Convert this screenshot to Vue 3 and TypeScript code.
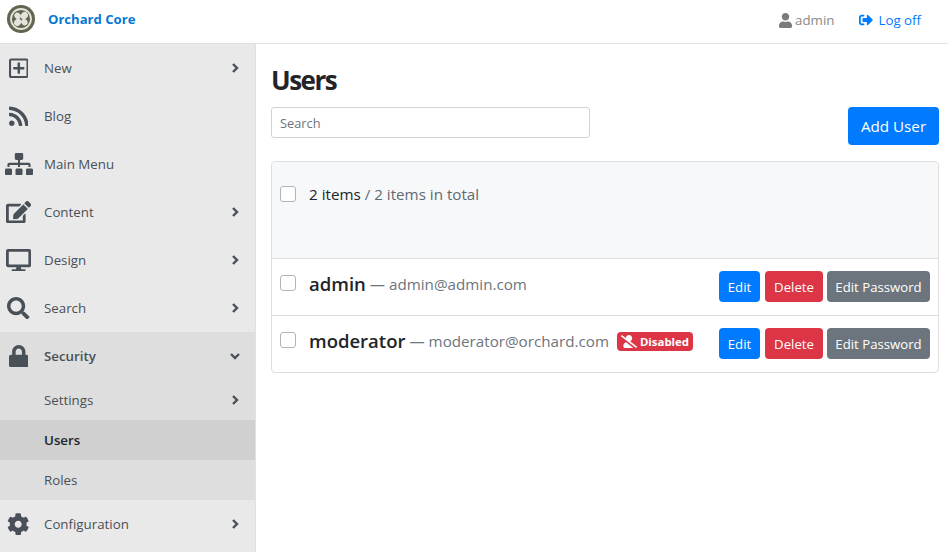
<script setup lang="ts">
interface Item { label: string; icon: string; arrow?: boolean }
const top: Item[] = [
  { label: 'New', icon: 'new', arrow: true },
  { label: 'Blog', icon: 'rss' },
  { label: 'Main Menu', icon: 'tree' },
  { label: 'Content', icon: 'edit', arrow: true },
  { label: 'Design', icon: 'desktop', arrow: true },
  { label: 'Search', icon: 'search', arrow: true },
]
const users = [
  { name: 'admin', email: 'admin@admin.com', disabled: false },
  { name: 'moderator', email: 'moderator@orchard.com', disabled: true },
]
</script>

<template>
  <div class="page">
    <header class="topbar">
      <div class="brand">
        <svg class="logo" width="28" height="28" viewBox="0 0 28 28">
          <circle cx="14" cy="14" r="14" fill="#62654f" />
          <circle cx="14" cy="14" r="10" fill="none" stroke="#e4e4da" stroke-width="1.800" />
          <g fill="#e4e4da">
            <ellipse cx="10.600" cy="10.800" rx="3.400" ry="3" transform="rotate(45 10.600 10.800)" />
            <ellipse cx="17.300" cy="10.700" rx="3.900" ry="3.300" transform="rotate(-45 17.300 10.700)" />
            <ellipse cx="17.400" cy="17.200" rx="3.400" ry="3" transform="rotate(45 17.400 17.200)" />
            <ellipse cx="10.700" cy="17.300" rx="3.900" ry="3.300" transform="rotate(-45 10.700 17.300)" />
          </g>
        </svg>
        <span class="brand-name">Orchard Core</span>
      </div>
      <nav class="user-nav">
        <span class="user">
          <svg width="13" height="15" viewBox="0 0 448 512"><path fill="#7b7b7b" d="M224 256c70.700 0 128-57.300 128-128S294.700 0 224 0 96 57.300 96 128s57.300 128 128 128zm89.600 32h-16.700c-22.200 10.200-46.900 16-72.900 16s-50.600-5.800-72.900-16h-16.700C60.200 288 0 348.200 0 422.400V464c0 26.500 21.500 48 48 48h352c26.500 0 48-21.500 48-48v-41.600c0-74.200-60.200-134.400-134.400-134.400z"/></svg>
          admin
        </span>
        <a class="logoff">
          <svg width="14" height="14" viewBox="0 0 512 512"><path fill="#007bff" d="M497 273L329 441c-15 15-41 4.500-41-17v-96H152c-13.300 0-24-10.700-24-24v-96c0-13.300 10.700-24 24-24h136V88c0-21.400 25.900-32 41-17l168 168c9.300 9.400 9.300 24.600 0 34zM192 436v-40c0-6.600-5.400-12-12-12H96c-17.700 0-32-14.300-32-32V160c0-17.700 14.300-32 32-32h84c6.600 0 12-5.400 12-12V76c0-6.600-5.400-12-12-12H96c-53 0-96 43-96 96v192c0 53 43 96 96 96h84c6.600 0 12-5.400 12-12z"/></svg>
          Log off
        </a>
      </nav>
    </header>
    <div class="body">
      <aside class="side">
        <div v-for="it in top" :key="it.label" class="item">
          <span class="ic">
            <svg v-if="it.icon === 'new'" width="19.600" height="22.400" viewBox="0 0 448 512"><path fill="#495057" d="M352 240v32c0 6.600-5.400 12-12 12h-88v88c0 6.600-5.400 12-12 12h-32c-6.600 0-12-5.400-12-12v-88h-88c-6.600 0-12-5.400-12-12v-32c0-6.600 5.400-12 12-12h88v-88c0-6.600 5.400-12 12-12h32c6.600 0 12 5.400 12 12v88h88c6.600 0 12 5.400 12 12zm96-160v352c0 26.500-21.500 48-48 48H48c-26.500 0-48-21.500-48-48V80c0-26.500 21.500-48 48-48h352c26.500 0 48 21.500 48 48zm-48 346V86c0-3.300-2.700-6-6-6H54c-3.300 0-6 2.700-6 6v340c0 3.300 2.700 6 6 6h340c3.300 0 6-2.700 6-6z"/></svg>
            <svg v-else-if="it.icon === 'rss'" width="19.600" height="22.400" viewBox="0 0 448 512"><path fill="#495057" d="M128.081 415.959c0 35.369-28.672 64.041-64.041 64.041S0 451.328 0 415.959s28.672-64.041 64.041-64.041 64.040 28.673 64.040 64.041zm175.660 47.250c-8.354-154.600-132.185-278.587-286.950-286.950C7.656 175.765 0 183.105 0 192.253v48.069c0 8.415 6.490 15.472 14.887 16.018 111.832 7.284 201.473 96.702 208.772 208.772.547 8.397 7.604 14.887 16.018 14.887h48.069c9.149.001 16.489-7.655 15.995-16.790zm144.249.288C439.596 229.677 251.465 40.445 16.503 32.010 7.473 31.686 0 38.981 0 48.016v48.068c0 8.625 6.835 15.645 15.453 15.999 191.179 7.839 344.627 161.316 352.465 352.465.353 8.618 7.373 15.453 15.999 15.453h48.068c9.034-.001 16.329-7.474 16.005-16.504z"/></svg>
            <svg v-else-if="it.icon === 'tree'" width="28" height="22.400" viewBox="0 0 640 512"><path fill="#495057" d="M128 352H32c-17.700 0-32 14.300-32 32v96c0 17.700 14.300 32 32 32h96c17.700 0 32-14.300 32-32v-96c0-17.700-14.300-32-32-32zm-24-80h192v48h48v-48h192v48h48v-57.600c0-21.200-17.200-38.400-38.400-38.400H344v-64h40c17.700 0 32-14.300 32-32V32c0-17.700-14.300-32-32-32H256c-17.700 0-32 14.300-32 32v96c0 17.700 14.300 32 32 32h40v64H94.400C73.200 224 56 241.200 56 262.400V320h48v-48zm264 80h-96c-17.700 0-32 14.300-32 32v96c0 17.700 14.300 32 32 32h96c17.700 0 32-14.300 32-32v-96c0-17.700-14.300-32-32-32zm240 0h-96c-17.700 0-32 14.300-32 32v96c0 17.700 14.300 32 32 32h96c17.700 0 32-14.300 32-32v-96c0-17.700-14.300-32-32-32z"/></svg>
            <svg v-else-if="it.icon === 'edit'" width="25.200" height="22.400" viewBox="0 0 576 512"><path fill="#495057" d="M402.600 83.200l90.200 90.200c3.800 3.800 3.800 10 0 13.800L274.400 405.600l-92.800 10.300c-12.400 1.400-22.900-9.100-21.500-21.500l10.300-92.800L388.800 83.200c3.800-3.800 10-3.800 13.800 0zm162-22.900l-48.800-48.800c-15.200-15.200-39.900-15.200-55.200 0l-35.400 35.400c-3.800 3.800-3.800 10 0 13.800l90.200 90.200c3.800 3.800 10 3.800 13.800 0l35.400-35.400c15.200-15.300 15.200-40 0-55.200zM384 346.200V448H64V128h229.800c3.200 0 6.200-1.300 8.500-3.500l40-40c7.600-7.600 2.200-20.500-8.500-20.500H48C21.500 64 0 85.500 0 112v352c0 26.500 21.500 48 48 48h352c26.500 0 48-21.500 48-48V306.200c0-10.700-12.900-16-20.500-8.500l-40 40c-2.200 2.300-3.500 5.300-3.500 8.500z"/></svg>
            <svg v-else-if="it.icon === 'desktop'" width="25.200" height="22.400" viewBox="0 0 576 512"><path fill="#495057" d="M528 0H48C21.500 0 0 21.500 0 48v320c0 26.500 21.500 48 48 48h192l-16 48h-72c-13.300 0-24 10.700-24 24s10.700 24 24 24h272c13.300 0 24-10.700 24-24s-10.700-24-24-24h-72l-16-48h192c26.500 0 48-21.500 48-48V48c0-26.500-21.500-48-48-48zm-16 352H64V64h448v288z"/></svg>
            <svg v-else-if="it.icon === 'search'" width="22.400" height="22.400" viewBox="0 0 512 512"><path fill="#495057" d="M505 442.700L405.300 343c-4.500-4.500-10.600-7-17-7H372c27.600-35.300 44-79.700 44-128C416 93.100 322.900 0 208 0S0 93.100 0 208s93.100 208 208 208c48.300 0 92.700-16.400 128-44v16.300c0 6.400 2.500 12.500 7 17l99.700 99.700c9.400 9.400 24.600 9.400 33.900 0l28.300-28.300c9.400-9.400 9.400-24.600.1-34zM208 336c-70.700 0-128-57.200-128-128 0-70.700 57.200-128 128-128 70.700 0 128 57.200 128 128 0 70.700-57.200 128-128 128z"/></svg>
          </span>
          <span class="label">{{ it.label }}</span>
          <svg v-if="it.arrow" class="chev" width="10" height="12" viewBox="0 0 10 12"><path d="M3 2l4 4-4 4" fill="none" stroke="#495057" stroke-width="2.400" /></svg>
        </div>
        <div class="item active">
          <span class="ic">
            <svg width="19.600" height="22.400" viewBox="0 0 448 512"><path fill="#495057" d="M400 224h-24v-72C376 68.200 307.800 0 224 0S72 68.200 72 152v72H48c-26.500 0-48 21.500-48 48v192c0 26.500 21.500 48 48 48h352c26.500 0 48-21.500 48-48V272c0-26.500-21.500-48-48-48zm-104 0H152v-72c0-39.700 32.300-72 72-72s72 32.300 72 72v72z"/></svg>
          </span>
          <span class="label strong">Security</span>
          <svg class="chev down" width="12" height="10" viewBox="0 0 12 10"><path d="M2 3l4 4 4-4" fill="none" stroke="#495057" stroke-width="2.400" /></svg>
        </div>
        <div class="sub">
          <span class="label">Settings</span>
          <svg class="chev" width="10" height="12" viewBox="0 0 10 12"><path d="M3 2l4 4-4 4" fill="none" stroke="#495057" stroke-width="2.400" /></svg>
        </div>
        <div class="sub current"><span class="label strong dark">Users</span></div>
        <div class="sub"><span class="label">Roles</span></div>
        <div class="item">
          <span class="ic">
            <svg width="22.400" height="22.400" viewBox="0 0 512 512"><path fill="#495057" d="M487.400 315.700l-42.600-24.600c4.300-23.200 4.300-47 0-70.200l42.600-24.600c4.900-2.800 7.100-8.600 5.500-14-11.100-35.600-30-67.800-54.700-94.600-3.800-4.100-10-5.100-14.800-2.300L380.800 110c-17.900-15.400-38.500-27.300-60.800-35.100V25.800c0-5.600-3.900-10.500-9.400-11.700-36.700-8.200-74.300-7.800-109.200 0-5.500 1.200-9.400 6.100-9.400 11.700V75c-22.200 7.900-42.800 19.800-60.800 35.100L88.700 85.500c-4.900-2.800-11-1.900-14.800 2.300-24.700 26.700-43.600 58.900-54.700 94.600-1.700 5.400.6 11.200 5.500 14L67.300 221c-4.300 23.200-4.300 47 0 70.200l-42.600 24.600c-4.900 2.800-7.100 8.600-5.500 14 11.100 35.600 30 67.800 54.700 94.600 3.800 4.100 10 5.100 14.800 2.300l42.600-24.600c17.900 15.400 38.500 27.300 60.800 35.100v49.200c0 5.600 3.900 10.500 9.400 11.700 36.700 8.200 74.300 7.800 109.200 0 5.500-1.200 9.400-6.100 9.400-11.700v-49.200c22.200-7.900 42.800-19.800 60.800-35.100l42.600 24.600c4.900 2.800 11 1.900 14.800-2.300 24.700-26.700 43.600-58.900 54.700-94.600 1.500-5.500-.7-11.300-5.600-14.100zM256 336c-44.100 0-80-35.900-80-80s35.900-80 80-80 80 35.900 80 80-35.900 80-80 80z"/></svg>
          </span>
          <span class="label">Configuration</span>
          <svg class="chev" width="10" height="12" viewBox="0 0 10 12"><path d="M3 2l4 4-4 4" fill="none" stroke="#495057" stroke-width="2.400" /></svg>
        </div>
      </aside>
      <main class="main">
        <h1 class="title">Users</h1>
        <div class="tools">
          <input class="search" placeholder="Search" />
          <button class="btn add">Add User</button>
        </div>
        <div class="list">
          <div class="list-head">
            <span class="check" />
            <span class="count"><span class="dark">2 items</span> / 2 items in total</span>
          </div>
          <div v-for="u in users" :key="u.name" class="row">
            <span class="check" />
            <span class="name">{{ u.name }}</span>
            <span class="mail">— {{ u.email }}</span>
            <span v-if="u.disabled" class="badge">
              <svg width="16" height="13" viewBox="0 0 640 512"><path fill="#fff" d="M633.800 458.100L362.300 248.300C412.100 230.700 448 183.800 448 128 448 57.300 390.700 0 320 0c-67.100 0-121.500 51.800-126.900 117.400L45.500 3.400C38.500-2 28.500-.8 23 6.200L3.400 31.500C-2 38.500-.8 48.500 6.200 53.900l588.400 454.700c7 5.400 17 4.200 22.500-2.800l19.600-25.300c5.300-6.900 4.100-17-2.900-22.400zM96 422.400V464c0 26.500 21.500 48 48 48h350.200L207.400 290.300C144.200 301.300 96 356 96 422.400z"/></svg>
              Disabled
            </span>
            <span class="actions">
              <button class="btn sm edit">Edit</button>
              <button class="btn sm del">Delete</button>
              <button class="btn sm pass">Edit Password</button>
            </span>
          </div>
        </div>
      </main>
    </div>
  </div>
</template>

<style>
html, body { margin: 0; background: #fff; }
</style>

<style scoped>
.page { width: 948px; height: 552px; overflow: hidden; font-family: "Open Sans", "Noto Sans", sans-serif; color: #212529; display: flex; flex-direction: column; }
.topbar { height: 38px; padding: 0 27px 5px 7px; flex: none; border-bottom: 1px solid #dee2e6; display: flex; align-items: center; justify-content: space-between; background: #fff; }
.brand { display: flex; align-items: center; gap: 13px; }
.logo { display: block; }
.brand-name { color: #0678d4; font-weight: 700; font-size: 13.100px; }
.user-nav { display: flex; align-items: center; gap: 25px; font-size: 13.300px; padding-top: 2px; }
.user { color: #8a8a8a; display: flex; align-items: center; gap: 3px; }
.logoff { color: #007bff; display: flex; align-items: center; gap: 5px; }
.body { display: flex; flex: 1; min-height: 0; }
.side { width: 255px; flex: none; background: #e9e9e9; border-right: 1px solid #dee2e6; }
.item { height: 48px; display: flex; align-items: center; padding: 0 15px 0 0; box-sizing: border-box; }
.item.active { background: #dedede; }
.ic { width: 37px; display: flex; justify-content: center; flex: none; margin-right: 7px; }
.ic svg { display: block; }
.label { font-size: 13.300px; color: #495057; flex: 1; }
.strong { font-weight: 600; }
.label.dark { color: #212529; }
.sub { height: 40px; display: flex; align-items: center; padding: 0 15px 0 44px; background: #dedede; }
.sub.current { background: #d0d0d0; }
.chev.down { margin-right: -1px; }
.main { flex: 1; padding: 20px 9px 0 15px; min-width: 0; }
.title { margin: 0; font-size: 26px; line-height: 33px; height: 34px; font-weight: 700; letter-spacing: -1.500px; color: #212529; }
.tools { display: flex; justify-content: space-between; align-items: flex-start; margin-top: 9px; }
.search { width: 319px; height: 31px; box-sizing: border-box; border: 1px solid #ced4da; border-radius: 3px; padding: 0 8px; font: 12.800px "Open Sans", sans-serif; color: #495057; }
.search::placeholder { color: #6c757d; opacity: 1; }
.btn { border: 0; border-radius: 4px; color: #fff; font-family: "Open Sans", "Noto Sans", sans-serif; }
.add { background: #007bff; height: 38px; width: 91px; font-size: 15.200px; padding: 0; }
.list { border: 1px solid #dfdfdf; border-radius: 4px; margin-top: 16px; }
.list-head { height: 96px; background: #f7f8f9; display: flex; align-items: flex-start; padding: 24px 8px 0; box-sizing: border-box; border-radius: 4px 4px 0 0; }
.check { width: 16px; height: 16px; border: 1px solid #adb5bd; border-radius: 3px; background: #fff; flex: none; margin-right: 13px; box-sizing: border-box; }
.count { font-size: 15.200px; color: #5f6a73; line-height: 17px; }
.dark { color: #212529; }
.row { height: 57px; border-top: 1px solid #dfdfdf; box-sizing: border-box; display: flex; align-items: flex-start; padding: 12px 8px 0; }
.row .check { margin-top: 4px; }
.name { font-size: 18.500px; font-weight: 600; line-height: 26px; color: #212529; margin-right: 4px; }
.mail { font-size: 15.200px; line-height: 27px; color: #6c757d; }
.badge { background: #dc3545; color: #fff; font-size: 11.400px; font-weight: 700; border-radius: 4px; height: 19px; display: flex; align-items: center; gap: 3px; padding: 0 4px; margin: 4px 0 0 8px; }
.actions { margin-left: auto; display: flex; gap: 4px; }
.sm { height: 31px; font-size: 13.200px; padding: 0; }
.edit { background: #007bff; width: 41px; margin-right: 1px; }
.del { background: #dc3545; width: 58px; }
.pass { background: #6c757d; width: 103px; }
</style>
